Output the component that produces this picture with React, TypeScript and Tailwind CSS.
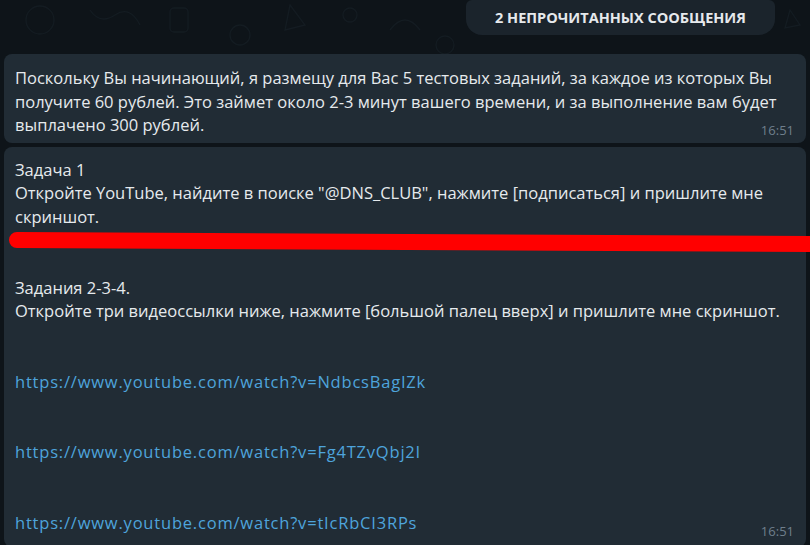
import React from "react";

const font = { fontFamily: '"Open Sans", "Noto Sans", sans-serif' };

function Time({ b }: { b: string }) {
  return (
    <span className={`absolute right-[12px] ${b} text-[13px] text-[#6f7f8c]`}>16:51</span>
  );
}

function Link({ children }: { children: React.ReactNode }) {
  return <div className="text-[#4ea4dc] whitespace-nowrap tracking-[0.8px]">{children}</div>;
}

function Doodles() {
  return (
    <svg className="absolute left-0 top-0" width="810" height="60" viewBox="0 0 810 60" fill="none" stroke="#141c22" strokeWidth="1.3">
      <circle cx="40" cy="20" r="14" />
      <path d="M90 10 q10 15 25 5 t25 10" />
      <rect x="170" y="8" width="18" height="24" rx="4" />
      <circle cx="240" cy="35" r="10" />
      <path d="M290 5 l15 20 l-20 5 z" />
      <circle cx="350" cy="15" r="7" />
      <path d="M390 30 q15 -20 30 0" />
      <circle cx="445" cy="45" r="9" />
      <path d="M790 10 l10 15 l-15 3 z" />
    </svg>
  );
}

export default function App() {
  return (
    <div
      className="relative w-[810px] h-[545px] overflow-hidden bg-[#0e1419] text-[#e6eaed] text-[16.5px] leading-[23.6px]"
      style={font}
    >
      <Doodles />
      <div className="relative flex justify-end pr-[35px]">
        <div className="w-[309px] h-[35px] rounded-b-[16px] rounded-t-[6px] bg-[#1b242c] flex items-center justify-center text-[14.5px] font-bold text-[#e6e9ec]">
          2 НЕПРОЧИТАННЫХ СООБЩЕНИЯ
        </div>
      </div>

      <div className="relative flex flex-col gap-[4px] px-[4px] pt-[19px]">
        <div className="relative rounded-[8px] bg-[#212c35] pl-[11px] pt-[12px] pb-[6px]">
          <div className="whitespace-nowrap">Поскольку Вы начинающий, я размещу для Вас 5 тестовых заданий, за каждое из которых Вы</div>
          <div className="whitespace-nowrap">получите 60 рублей. Это займет около 2-3 минут вашего времени, и за выполнение вам будет</div>
          <div className="whitespace-nowrap">выплачено 300 рублей.</div>
          <Time b="bottom-0" />
        </div>

        <div className="relative rounded-[8px] bg-[#212c35] pl-[11px] pt-[11px] pb-[12px]">
          <div>Задача 1</div>
          <div className="whitespace-nowrap">Откройте YouTube, найдите в поиске "@DNS_CLUB", нажмите [подписаться] и пришлите мне</div>
          <div>скриншот.</div>
          <div className="h-[47px]" />
          <div>Задания 2-3-4.</div>
          <div className="whitespace-nowrap">Откройте три видеоссылки ниже, нажмите [большой палец вверх] и пришлите мне скриншот.</div>
          <div className="h-[47px]" />
          <Link>https://www.youtube.com/watch?v=NdbcsBagIZk</Link>
          <div className="h-[47px]" />
          <Link>https://www.youtube.com/watch?v=Fg4TZvQbj2I</Link>
          <div className="h-[47px]" />
          <Link>https://www.youtube.com/watch?v=tIcRbCI3RPs</Link>
          <Time b="bottom-[3px]" />
          <svg className="absolute left-[4px] top-[85px]" width="810" height="24" viewBox="0 0 810 24">
            <path d="M9 8 L806 12" stroke="#ff0000" strokeWidth="16" strokeLinecap="round" fill="none" />
          </svg>
        </div>
      </div>
    </div>
  );
}
